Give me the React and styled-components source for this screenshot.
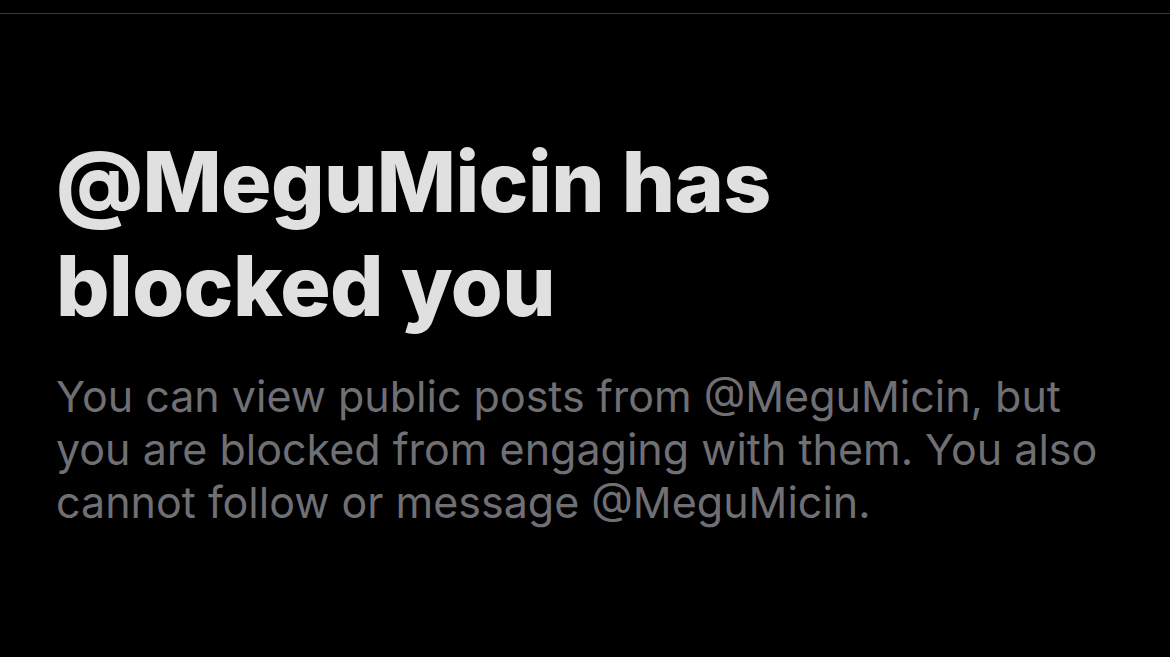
import React from "react";
import styled, { createGlobalStyle } from "styled-components";

const Global = createGlobalStyle`
  html, body { margin: 0; padding: 0; background: #000; }
  body { font-family: Inter, "Liberation Sans", sans-serif; }
`;

const Page = styled.div`
  width: 1170px;
  height: 657px;
  background: #000;
  display: flex;
  flex-direction: column;
  overflow: hidden;
`;

const TopBar = styled.div`
  height: 13px;
  border-bottom: 1px solid #3a3a3c;
  flex-shrink: 0;
`;

const Content = styled.div`
  padding: 116px 57px 0 56px;
  display: flex;
  flex-direction: column;
  gap: 32px;
`;

const Title = styled.h1`
  margin: 0;
  font-size: 84px;
  line-height: 104px;
  font-weight: 800;
  color: #e0e0e0;
  letter-spacing: -0.6px;
  width: 780px;
`;

const Body = styled.p`
  margin: 0;
  font-size: 43px;
  line-height: 53px;
  font-weight: 400;
  color: #6f6f74;
  width: 1060px;
`;

export default function App() {
  return (
    <Page>
      <Global />
      <TopBar />
      <Content>
        <Title>@MeguMicin has blocked you</Title>
        <Body>
          You can view public posts from @MeguMicin, but you are blocked from
          engaging with them. You also cannot follow or message @MeguMicin.
        </Body>
      </Content>
    </Page>
  );
}
